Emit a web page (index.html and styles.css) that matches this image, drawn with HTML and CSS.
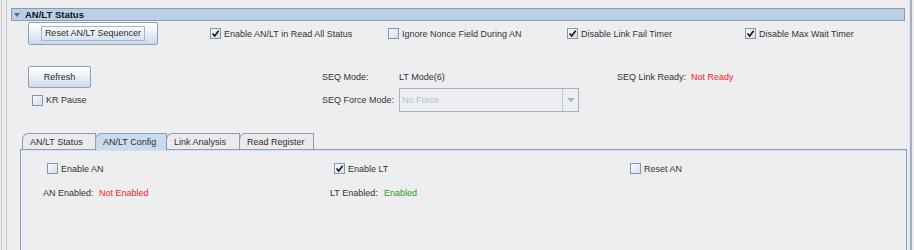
FILE: index.html
```html
<!DOCTYPE html>
<html>
<head>
<meta charset="utf-8">
<link rel="stylesheet" href="styles.css">
</head>
<body>
<div class="frame">
  <div class="inner">
    <div class="section-head"><span class="tri"></span><span class="head-title">AN/LT Status</span></div>

    <div class="row1">
      <button class="btn btn-wide"><span class="focus">Reset AN/LT Sequencer</span></button>
      <label class="chk"><span class="box checked"><svg viewBox="0 0 11 11" width="11" height="11"><path d="M3 6 L4.7 8 L8.2 3.3" fill="none" stroke="#111" stroke-width="1.5" stroke-linecap="square"/></svg></span>Enable AN/LT in Read All Status</label>
      <label class="chk"><span class="box"></span>Ignore Nonce Field During AN</label>
      <label class="chk"><span class="box checked"><svg viewBox="0 0 11 11" width="11" height="11"><path d="M3 6 L4.7 8 L8.2 3.3" fill="none" stroke="#111" stroke-width="1.5" stroke-linecap="square"/></svg></span>Disable Link Fail Timer</label>
      <label class="chk"><span class="box checked"><svg viewBox="0 0 11 11" width="11" height="11"><path d="M3 6 L4.7 8 L8.2 3.3" fill="none" stroke="#111" stroke-width="1.5" stroke-linecap="square"/></svg></span>Disable Max Wait Timer</label>
    </div>

    <div class="row2">
      <div><button class="btn btn-refresh">Refresh</button></div>
      <div class="lbl">SEQ Mode:</div>
      <div class="val">LT Mode(6)</div>
      <div class="pair"><span class="pair-lbl w74">SEQ Link Ready:</span><span class="red">Not Ready</span></div>
    </div>

    <div class="row3">
      <label class="chk indent"><span class="box"></span>KR Pause</label>
      <div class="lbl">SEQ Force Mode:</div>
      <div class="combo"><span class="combo-text">No Force</span><span class="combo-arrow"><span class="arrow"></span></span></div>
      <div></div>
    </div>

    <div class="tabs">
      <div class="tab t1">AN/LT Status</div>
      <div class="tab t2 selected">AN/LT Config</div>
      <div class="tab t3">Link Analysis</div>
      <div class="tab t4">Read Register</div>
    </div>
    <div class="panel">
      <div class="prow">
        <label class="chk indent"><span class="box"></span>Enable AN</label>
        <label class="chk indent"><span class="box checked"><svg viewBox="0 0 11 11" width="11" height="11"><path d="M3 6 L4.7 8 L8.2 3.3" fill="none" stroke="#111" stroke-width="1.5" stroke-linecap="square"/></svg></span>Enable LT</label>
        <label class="chk indent"><span class="box"></span>Reset AN</label>
      </div>
      <div class="prow prow2">
        <div class="pair"><span class="pair-lbl w56">AN Enabled:</span><span class="red">Not Enabled</span></div>
        <div class="pair"><span class="pair-lbl w54">LT Enabled:</span><span class="green">Enabled</span></div>
        <div></div>
      </div>
    </div>
  </div>
</div>
</body>
</html>
```
FILE: styles.css
```css
* { box-sizing: border-box; }
html, body { margin: 0; padding: 0; background: #eeeef0; }
body {
  font-family: "Liberation Sans", Arial, sans-serif;
  font-size: 9px;
  color: #333;
  width: 914px;
  height: 250px;
  overflow: hidden;
}
.frame {
  margin-left: 1px;
  width: 911px;
  height: 250px;
  border-left: 1px solid #cacacf;
  border-right: 2px solid #a4b0c4;
  padding-left: 4px;
}
.inner {
  height: 250px;
  border-left: 1px solid #c6c6cc;
  border-right: 1px solid #e2e2e8;
  padding-left: 4px;
  padding-top: 8px;
}
.section-head {
  height: 13px;
  margin-right: 4px;
  border: 1px solid #8d9aab;
  background: #b9d0e8;
  display: flex;
  align-items: center;
  padding-left: 2px;
}
.tri {
  width: 0; height: 0;
  border-left: 3px solid transparent;
  border-right: 3px solid transparent;
  border-top: 4px solid #5e6a7c;
  margin-right: 5px;
}
.head-title { font-weight: bold; font-size: 9.5px; color: #111; }

.row1 {
  margin-top: 1px;
  padding-left: 17px;
  height: 23px;
  display: grid;
  grid-template-columns: 182px 178px 179px 178px 1fr;
  align-items: center;
}
.btn {
  font-family: inherit;
  font-size: 9px;
  color: #2a2a2a;
  border: 1px solid #8fa0b4;
  border-radius: 2px;
  background: linear-gradient(#fdfeff 0%, #f1f5fa 35%, #d9e5f2 75%, #c9d9eb 100%);
  padding: 0;
  margin: 0;
  display: flex;
  align-items: center;
  justify-content: center;
}
.btn-wide { width: 130px; height: 23px; }
.btn-refresh { width: 63px; height: 22px; }
.focus {
  display: inline-block;
  border: 1px solid #aab4c3;
  padding: 2px 3px 2px 3px;
  line-height: 9px;
}
.chk {
  display: flex;
  align-items: center;
  white-space: nowrap;
}
.box {
  width: 11px;
  height: 11px;
  flex: none;
  border: 1px solid #8797ab;
  background: linear-gradient(135deg, #f6f9fc, #d3deeb);
  margin-right: 3px;
  position: relative;
}
.box svg { position: absolute; left: -1px; top: -1px; }
.indent { margin-left: 4px; }

.row2, .row3 {
  padding-left: 17px;
  display: grid;
  grid-template-columns: 294px 77px 218px 1fr;
  align-items: center;
}
.row2 { margin-top: 21px; height: 22px; }
.row3 { height: 24px; }
.pair { display: flex; align-items: center; white-space: nowrap; }
.pair-lbl { flex: none; }
.w74 { width: 74px; }
.w56 { width: 56px; }
.w54 { width: 54px; }
.red { color: #f21c1c; }
.green { color: #2a9a2a; }

.combo {
  width: 180px;
  height: 24px;
  border: 1px solid #a5b5c8;
  background: #eeeef0;
  display: flex;
  align-items: stretch;
}
.combo-text {
  flex: 1;
  color: #adc0d8;
  padding-left: 2px;
  display: flex;
  align-items: center;
}
.combo-arrow {
  width: 16px;
  border-left: 1px solid #b9c7d7;
  display: flex;
  align-items: center;
  justify-content: center;
}
.arrow {
  width: 0; height: 0;
  border-left: 4px solid transparent;
  border-right: 4px solid transparent;
  border-top: 4px solid #9fb3ca;
}

.tabs {
  margin-top: 21px;
  margin-left: 11px;
  height: 16px;
  display: flex;
  position: relative;
  z-index: 1;
}
.tab {
  height: 16px;
  border: 1px solid #909cad;
  border-bottom: none;
  border-top-left-radius: 6px 7px;
  border-top-right-radius: 1px;
  background: #ebebee;
  padding-left: 7px;
  display: flex;
  align-items: center;
  color: #2e2e2e;
}
.t1 { width: 74px; }
.t2 { width: 72px; margin-left: -1px; }
.t3 { width: 74px; margin-left: -1px; }
.t4 { width: 75px; margin-left: -1px; }
.tab.selected {
  background: #c9dbef;
  height: 17px;
  margin-bottom: -1px;
  border-color: #8ea1ba;
}
.panel {
  margin-left: 9px;
  margin-right: 2px;
  height: 110px;
  border: 1px solid #7f9cc8;
  border-top-color: #8aa0bc;
  box-shadow: inset 0 1px 0 #d3dfed;
  padding-top: 12px;
  padding-left: 22px;
}
.prow {
  display: grid;
  grid-template-columns: 287px 296px 1fr;
  align-items: center;
  height: 13px;
}
.prow2 { margin-top: 11px; }
```
